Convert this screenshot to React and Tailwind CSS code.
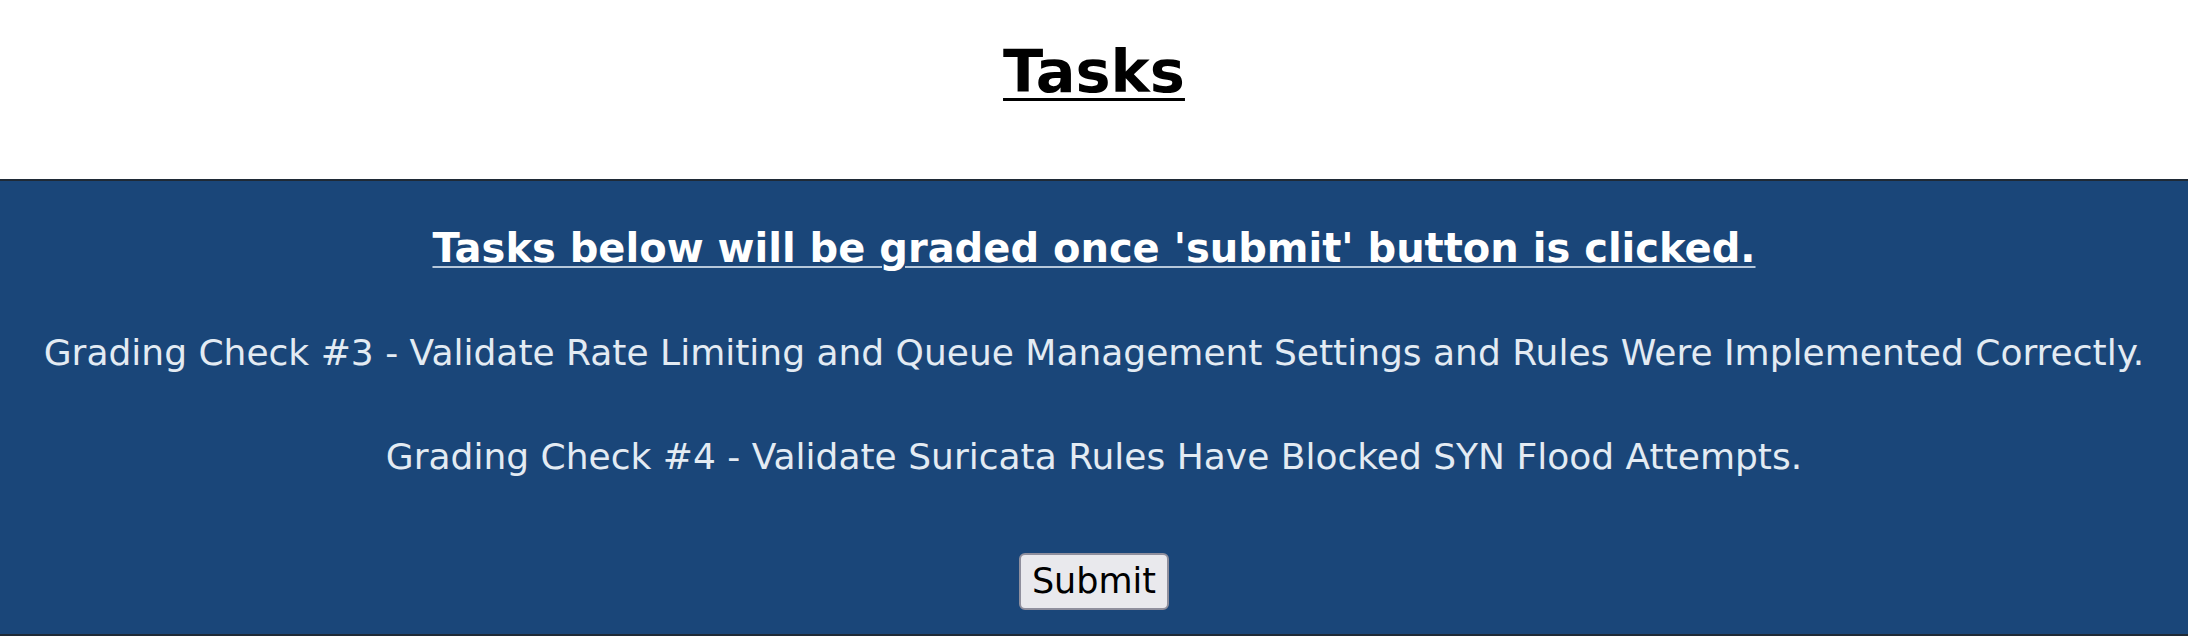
export default function App() {
  return (
    <div className="min-h-screen bg-white" style={{ fontFamily: '"DejaVu Sans", Verdana, sans-serif' }}>
      <div className="h-[179px] pt-[37px] text-center">
        <h1 className="text-[59px] font-bold leading-[70px] text-black underline decoration-[3px] underline-offset-[6px]">
          Tasks
        </h1>
      </div>
      <section className="border-y-2 border-[#1f2a36] bg-[#1a4679] text-center pt-[42px] pb-[24px]">
        <h2 className="text-[40px] font-bold leading-[50px] text-white underline decoration-[#b7c8da] decoration-2 underline-offset-[4px]">
          Tasks below will be graded once 'submit' button is clicked.
        </h2>
        <p className="mt-[55px] text-[36px] leading-[50px] text-[#e3ebf3]">
          Grading Check #3 - Validate Rate Limiting and Queue Management Settings and Rules Were Implemented Correctly.
        </p>
        <p className="mt-[54px] text-[36px] leading-[50px] text-[#e3ebf3]">
          Grading Check #4 - Validate Suricata Rules Have Blocked SYN Flood Attempts.
        </p>
        <div className="mt-[71px]">
          <button className="h-[57px] w-[150px] rounded-[6px] border-2 border-[#8f8f9d] bg-[#e9e9ed] text-[35px] leading-none text-black">
            Submit
          </button>
        </div>
      </section>
    </div>
  );
}
